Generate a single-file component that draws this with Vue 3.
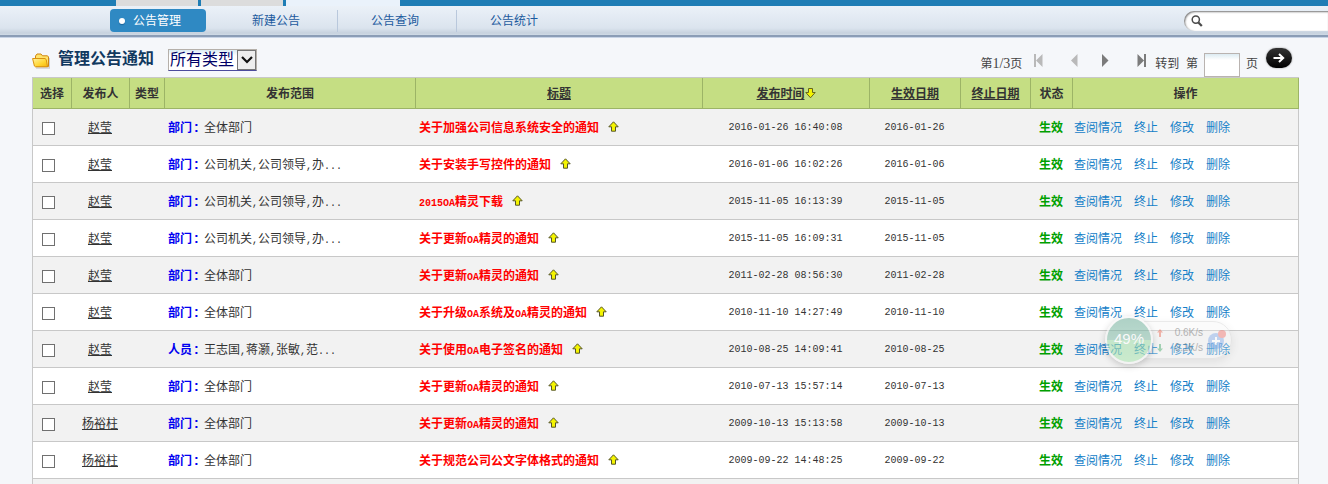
<script setup>
import { ref } from 'vue'

const tabs = [
  { label: '公告管理', active: true },
  { label: '新建公告', active: false },
  { label: '公告查询', active: false },
  { label: '公告统计', active: false }
]

const columns = [
  { label: '选择', cls: 'c-pick' },
  { label: '发布人', cls: 'c-author' },
  { label: '类型', cls: 'c-type' },
  { label: '发布范围', cls: 'c-scope' },
  { label: '标题', cls: 'c-title', link: true },
  { label: '发布时间', cls: 'c-time', link: true, sorted: true },
  { label: '生效日期', cls: 'c-start', link: true },
  { label: '终止日期', cls: 'c-end', link: true },
  { label: '状态', cls: 'c-state' },
  { label: '操作', cls: 'c-ops' }
]

const make = (author, kind, scope, title, time) => ({
  author, kind, scope, title, time, date: time.slice(0, 10), picked: false
})

const rows = ref([
  make('赵莹', '部门', '全体部门', '关于加强公司信息系统安全的通知', '2016-01-26 16:40:08'),
  make('赵莹', '部门', '公司机关,公司领导,办...', '关于安装手写控件的通知', '2016-01-06 16:02:26'),
  make('赵莹', '部门', '公司机关,公司领导,办...', '2015OA精灵下载', '2015-11-05 16:13:39'),
  make('赵莹', '部门', '公司机关,公司领导,办...', '关于更新OA精灵的通知', '2015-11-05 16:09:31'),
  make('赵莹', '部门', '全体部门', '关于更新OA精灵的通知', '2011-02-28 08:56:30'),
  make('赵莹', '部门', '全体部门', '关于升级OA系统及OA精灵的通知', '2010-11-10 14:27:49'),
  make('赵莹', '人员', '王志国,蒋灏,张敏,范...', '关于使用OA电子签名的通知', '2010-08-25 14:09:41'),
  make('赵莹', '部门', '全体部门', '关于更新OA精灵的通知', '2010-07-13 15:57:14'),
  make('杨裕柱', '部门', '全体部门', '关于更新OA精灵的通知', '2009-10-13 15:13:58'),
  make('杨裕柱', '部门', '全体部门', '关于规范公司公文字体格式的通知', '2009-09-22 14:48:25')
])

const actions = ['查阅情况', '终止', '修改', '删除']

// Splits mixed text into runs so that Latin characters take half a CJK cell.
const runs = (text) =>
  text.match(/[\x20-\x7e]+|[^\x20-\x7e]+/g).map((t) => ({ t, half: /^[\x20-\x7e]/.test(t) }))
</script>

<template>
  <div class="page">
    <div class="top">
      <span class="top-tab"></span>
      <span class="top-tab"></span>
      <span class="top-tab current"></span>
    </div>

    <header class="bar">
      <nav class="nav">
        <a v-for="tab in tabs" :key="tab.label" href="#" :class="['nav-item', { active: tab.active }]">
          <span v-if="tab.active" class="dot"></span>{{ tab.label }}
        </a>
      </nav>
      <div class="search">
        <svg width="12" height="12" viewBox="0 0 12 12" aria-hidden="true">
          <circle cx="4.8" cy="4.6" r="3.6" fill="none" stroke="#4a4a4a" stroke-width="1.5" />
          <path d="M7.4 7.4 L10.8 11" stroke="#4a4a4a" stroke-width="2.2" />
        </svg>
        <input type="text" aria-label="搜索" />
      </div>
    </header>

    <main class="main">
      <div class="head">
        <svg class="folder" width="18" height="16" viewBox="0 0 18 16" aria-hidden="true">
          <defs>
            <linearGradient id="folder-front" x1="0" y1="0" x2="1" y2="1">
              <stop offset="0" stop-color="#fff3a0" />
              <stop offset="0.6" stop-color="#ffd530" />
              <stop offset="1" stop-color="#f5b50c" />
            </linearGradient>
          </defs>
          <path d="M4 15 H17.500 V5" fill="none" stroke="#d0d0d4" stroke-width="1.4" />
          <path d="M3.500 12 V3 L5 1 H9 L10.500 2.800 H15.500 L16.500 4 V13.500 H4 Z" fill="#ffe36a" stroke="#cf8612" />
          <path d="M0.600 5.500 H13 L14.200 6.500 L15.600 13.800 H3.400 L2.400 13 Z" fill="url(#folder-front)" stroke="#d9920f" />
        </svg>
        <h1>管理公告通知</h1>
        <div class="picker">
          <select aria-label="公告类型">
            <option>所有类型</option>
          </select>
          <span class="arrow">
            <svg width="12" height="8" viewBox="0 0 12 8" aria-hidden="true">
              <path d="M1 1 L6 6 L11 1" fill="none" stroke="#111" stroke-width="2.2" />
            </svg>
          </span>
        </div>

        <div class="pager">
          <span class="count">第<span class="digits">1/3</span>页</span>
          <button type="button" class="step first" aria-label="首页" disabled>
            <svg width="9" height="13" viewBox="0 0 9 13"><path d="M0 0h2v13h-2z M8.500 0v13L2 6.500z" fill="#b9b9b9" /></svg>
          </button>
          <button type="button" class="step prev" aria-label="上一页" disabled>
            <svg width="7" height="13" viewBox="0 0 7 13"><path d="M6.500 0v13L0 6.500z" fill="#b9b9b9" /></svg>
          </button>
          <button type="button" class="step next" aria-label="下一页">
            <svg width="7" height="13" viewBox="0 0 7 13"><path d="M0 0v13L6.500 6.500z" fill="#7b7b7b" /></svg>
          </button>
          <button type="button" class="step last" aria-label="末页">
            <svg width="9" height="13" viewBox="0 0 9 13"><path d="M7 0h2v13h-2z M0.500 0v13L7 6.500z" fill="#7b7b7b" /></svg>
          </button>
          <label class="goto" for="page-no">转到&nbsp; 第</label>
          <input id="page-no" class="page-no" type="text" />
          <span class="unit">页</span>
          <button type="button" class="go" aria-label="转到">
            <svg width="12" height="10" viewBox="0 0 12 10"><path d="M0.500 5H10 M6 1L10.200 5L6 9" fill="none" stroke="#fff" stroke-width="2" /></svg>
          </button>
        </div>
      </div>

      <table class="list">
        <thead>
          <tr>
            <th v-for="col in columns" :key="col.label" :class="col.cls" scope="col">
              <div class="head-cell">
                <a v-if="col.link" href="#">{{ col.label }}</a>
                <template v-else>{{ col.label }}</template>
                <svg v-if="col.sorted" width="11" height="11" viewBox="0 0 11 11" aria-hidden="true">
                  <path d="M3.500 0.500H7.500V4.500H10.200L5.500 9.800L0.800 4.500H3.500Z" fill="#f4f400" stroke="#66661c" />
                </svg>
              </div>
            </th>
          </tr>
        </thead>
        <tbody>
          <tr v-for="(row, i) in rows" :key="i">
            <td class="center"><input v-model="row.picked" class="tick" type="checkbox" :aria-label="row.title" /></td>
            <td class="center"><a class="author" href="#">{{ row.author }}</a></td>
            <td></td>
            <td>
              <div class="line">
                <b class="kind">{{ row.kind }}<span class="colon">:</span></b>
                <span><span v-for="(r, k) in runs(row.scope)" :key="k" :class="{ half: r.half }">{{ r.t }}</span></span>
              </div>
            </td>
            <td>
              <div class="line">
                <a class="title" href="#"><span v-for="(r, k) in runs(row.title)" :key="k" :class="{ half: r.half }">{{ r.t }}</span></a>
                <svg class="up" width="11" height="11" viewBox="0 0 11 11" aria-hidden="true">
                  <path d="M3.500 10.200H7.500V5.800H10.200L5.500 0.800L0.800 5.800H3.500Z" fill="#f4f400" stroke="#55552a" />
                </svg>
              </div>
            </td>
            <td class="center half">{{ row.time }}</td>
            <td class="center half">{{ row.date }}</td>
            <td></td>
            <td class="center state">生效</td>
            <td><div class="ops"><a v-for="a in actions" :key="a" href="#">{{ a }}</a></div></td>
          </tr>
        </tbody>
        <tfoot>
          <tr>
            <td :colspan="columns.length"></td>
          </tr>
        </tfoot>
      </table>
    </main>

    <aside class="meter">
      <div class="ball">49%</div>
      <div class="speeds">
        <span class="speed">
          <svg width="6" height="8" viewBox="0 0 6 8" aria-hidden="true"><path d="M3 0L6 3.500H4V8H2V3.500H0Z" fill="#ee8877" /></svg>0.6K/s
        </span>
        <span class="speed">
          <svg width="6" height="8" viewBox="0 0 6 8" aria-hidden="true"><path d="M3 8L6 4.500H4V0H2V4.500H0Z" fill="#6dbb88" /></svg>0.1K/s
        </span>
      </div>
      <div class="plus">
        <svg width="20" height="20" viewBox="0 0 20 20" aria-hidden="true">
          <circle cx="9" cy="11" r="8" fill="#9dbcec" />
          <path d="M9 7V15M5 11H13" stroke="#fff" stroke-width="2" />
          <circle cx="15" cy="4" r="4" fill="#f2908c" />
        </svg>
      </div>
    </aside>
  </div>
</template>

<style>
body {
  margin: 0;
  background: #f5f7fa;
}
</style>

<style scoped>
.page {
  position: relative;
  font-family: "Liberation Sans", "Noto Sans CJK SC", sans-serif;
  font-size: 12px;
  line-height: 18px;
  color: #333;
}
a {
  color: inherit;
}
svg {
  display: block;
}
.top {
  display: flex;
  gap: 3px;
  height: 6px;
  padding-left: 116px;
  background: #1f7db5;
}
.top-tab {
  width: 82px;
  background: #dcdcdc;
}
.top-tab.current {
  width: 114px;
  background: #eaf2fb;
}
.bar {
  display: flex;
  justify-content: space-between;
  box-sizing: border-box;
  height: 32px;
  background: linear-gradient(#ebf1f8 0, #dbe4ee 22px, #c7d2de 27px, #d0dbe6 29px);
  border-bottom: 1px solid #c8d4e6;
  box-shadow: inset 0 -2px #8b9db6;
}
.nav {
  display: flex;
  padding-left: 100px;
}
.nav-item {
  box-sizing: border-box;
  width: 119px;
  height: 22px;
  margin-top: 4px;
  padding-left: 33px;
  border-right: 1px solid #b9c8dc;
  color: #1c5a9e;
  line-height: 22px;
  text-decoration: none;
}
.nav-item:last-child {
  border-right: 0;
}
.nav-item.active {
  display: flex;
  align-items: center;
  width: 96px;
  height: 23px;
  margin: 3px 13px 0 10px;
  padding-left: 9px;
  border: 0;
  border-radius: 4px;
  background: #2f89c3;
  color: #fff;
}
.dot {
  width: 6px;
  height: 6px;
  margin-right: 8px;
  border-radius: 50%;
  background: #fff;
  box-shadow: 0 1px 1px #1b649a;
}
.search {
  display: flex;
  align-items: center;
  box-sizing: border-box;
  width: 144px;
  height: 20px;
  margin-top: 5px;
  padding-left: 7px;
  border-radius: 10px 0 0 10px;
  background: #fff;
  box-shadow: inset 1px 1px 2px #777;
}
.search input {
  flex: 1;
  min-width: 0;
  margin-left: 4px;
  border: 0;
  background: none;
  outline: 0;
}
.main {
  padding: 0 29px 0 32px;
}
.head {
  display: flex;
  align-items: flex-start;
  height: 39px;
}
.folder {
  margin-top: 15px;
}
h1 {
  margin: 9px 14px 0 8px;
  font-size: 16px;
  line-height: 24px;
  color: #11395f;
  white-space: nowrap;
}
.picker {
  display: flex;
  box-sizing: border-box;
  width: 89px;
  height: 22px;
  margin-top: 11px;
  border: 1px solid #b5b0aa;
  border-bottom-color: #4b4b9c;
  background: linear-gradient(#dcebf2, #fff 6px);
}
.picker select {
  flex: 1;
  min-width: 0;
  padding: 0 0 0 1px;
  border: 0;
  appearance: none;
  background: none;
  color: #000066;
  font-family: inherit;
  font-size: 16px;
  line-height: 18px;
}
.arrow {
  display: flex;
  align-items: center;
  justify-content: center;
  box-sizing: border-box;
  width: 19px;
  border: 1px solid #777;
  background: #eee;
  pointer-events: none;
}
.pager {
  display: flex;
  align-items: flex-start;
  margin: 0 7px 0 auto;
  color: #444;
  white-space: nowrap;
}
.count,
.goto,
.unit {
  margin-top: 17px;
}
.digits {
  font-family: "Liberation Serif", serif;
  font-size: 14px;
}
.step {
  margin-top: 16px;
  padding: 0;
  border: 0;
  background: none;
}
.first {
  margin-left: 12px;
}
.prev {
  margin-left: 28px;
}
.next {
  margin-left: 24px;
}
.last {
  margin-left: 28px;
}
.goto {
  margin-left: 9px;
}
.page-no {
  box-sizing: border-box;
  width: 36px;
  height: 24px;
  margin: 15px 6px 0 6px;
  border: 1px solid #b9b3b0;
  background: linear-gradient(#dcebf2, #fff 6px);
}
.go {
  display: flex;
  align-items: center;
  justify-content: center;
  width: 26px;
  height: 20px;
  margin: 10px 0 0 8px;
  padding: 0;
  border: 0;
  border-radius: 10px;
  background: linear-gradient(#333, #000);
  box-shadow: 0 0 2px #888;
}
.list {
  width: 100%;
  table-layout: fixed;
  border-spacing: 0;
  border: 1px solid #c8c8c8;
  border-bottom: 0;
  border-right: 0;
  background: #fff;
}
th {
  box-sizing: border-box;
  height: 31px;
  padding: 2px 0 0;
  border-right: 1px solid #9cb466;
  border-bottom: 1px solid #9cb466;
  background: #c5de83;
  color: #333;
  font-weight: bold;
  white-space: nowrap;
}
.head-cell {
  display: flex;
  justify-content: center;
}
.c-pick { width: 39px; }
.c-author { width: 58px; }
.c-type { width: 35px; }
.c-scope { width: 251px; }
.c-time { width: 167px; }
.c-start { width: 91px; }
.c-end { width: 70px; }
.c-state { width: 42px; }
.c-ops { width: 226px; }
.head-cell svg {
  margin-top: 3px;
}
td {
  box-sizing: border-box;
  height: 37px;
  padding: 2px 0 0 3px;
  border-bottom: 1px solid #c8c8c8;
  white-space: nowrap;
}
td:last-child {
  padding-left: 1px;
  border-right: 1px solid #c8c8c8;
}
tbody tr:nth-child(odd),
tfoot tr {
  background: #f2f2f2;
}
tfoot td {
  height: 5px;
  padding: 0;
  border-bottom: 0;
}
td.center {
  padding: 2px 2px 0 0;
  text-align: center;
}
.line {
  display: flex;
  height: 18px;
}
.half {
  font-family: "Liberation Mono", monospace;
  font-size: 10px;
  line-height: 12px;
}
.tick {
  display: block;
  box-sizing: border-box;
  width: 13px;
  height: 13px;
  margin: 0 0 0 9px;
  appearance: none;
  border: 1px solid #707070;
  background: #fff;
}
.tick:checked {
  background: #707070;
}
.kind {
  width: 36px;
  color: #0000f0;
}
.colon {
  margin-left: 2px;
  font-size: 14px;
  line-height: 12px;
}
.title {
  color: #f00;
  font-weight: bold;
  text-decoration: none;
}
.up {
  margin: 2px 0 0 9px;
}
.state {
  color: #00a000;
  font-weight: bold;
}
.ops {
  display: flex;
  gap: 12px;
  color: #1480c8;
}
.ops a {
  text-decoration: none;
}
.meter {
  position: absolute;
  top: 316px;
  right: 96px;
  display: flex;
  align-items: center;
  width: 127px;
  height: 48px;
  opacity: 0.6;
}
.meter::before {
  content: "";
  position: absolute;
  inset: 5px 0 5px 20px;
  border: 1px solid #ddd;
  border-radius: 20px;
  background: rgba(245, 245, 245, 0.5);
  box-shadow: 0 3px 8px rgba(0, 0, 0, 0.12);
}
.ball {
  position: relative;
  box-sizing: border-box;
  width: 48px;
  height: 48px;
  border: 2px solid #f4f4f4;
  border-radius: 50%;
  background: linear-gradient(#79b3a0 0, #8fc3b0 50%, #a6dfb0 51%, #b0e6b4 100%);
  box-shadow: 0 2px 6px rgba(0, 0, 0, 0.3);
  color: #fff;
  font-size: 15px;
  line-height: 42px;
  text-align: center;
}
.speeds {
  position: relative;
  display: flex;
  flex-direction: column;
  width: 50px;
  font-size: 10px;
  line-height: 15px;
  color: #888;
}
.speed {
  display: flex;
  align-items: center;
  justify-content: space-between;
  padding-left: 4px;
}
.plus {
  position: relative;
  margin-left: 4px;
}
</style>
